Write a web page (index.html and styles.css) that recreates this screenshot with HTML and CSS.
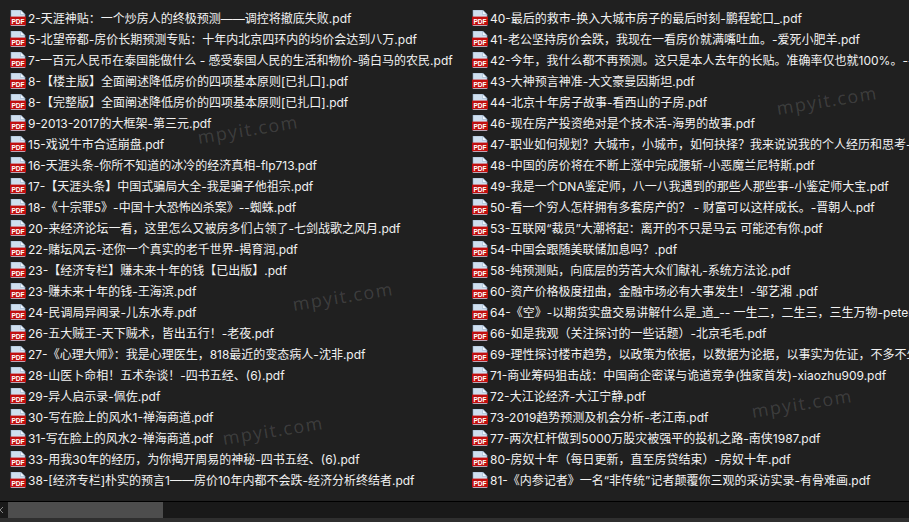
FILE: index.html
```html
<!DOCTYPE html>
<html lang="zh-CN">
<head>
  <meta charset="UTF-8">
  <title>PDF files</title>
  <link rel="stylesheet" href="styles.css">
</head>
<body>
  <svg class="defs" width="0" height="0">
    <symbol id="pdf" viewBox="0 0 16 16">
      <path d="M1 0H10.5L15 4.5V16H1Z" fill="#cfdfef" stroke="#8ea8c4" stroke-width=".6"/>
      <path d="M10.5 0V4.5H15Z" fill="#f2f8ff" stroke="#8ea8c4" stroke-width=".5"/>
      <rect x="0" y="6.6" width="16" height="8.6" fill="#c00f0f"/>
      <text x="8" y="13.6" text-anchor="middle" class="pdf-label">PDF</text>
    </symbol>
  </svg>

  <div class="files">
    <ul class="col">
      <li><svg class="ico"><use href="#pdf"/></svg>2-天涯神贴&#xFF1A;一个炒房人的终极预测——调控将撤底失败.pdf</li>
      <li><svg class="ico"><use href="#pdf"/></svg>5-北望帝都-房价长期预测专贴&#xFF1A;十年内北京四环内的均价会达到八万.pdf</li>
      <li><svg class="ico"><use href="#pdf"/></svg>7-一百元人民币在泰国能做什么 - 感受泰国人民的生活和物价-骑白马的农民.pdf</li>
      <li><svg class="ico"><use href="#pdf"/></svg>8-【楼主版】全面阐述降低房价的四项基本原则[已扎口].pdf</li>
      <li><svg class="ico"><use href="#pdf"/></svg>8-【完整版】全面阐述降低房价的四项基本原则[已扎口].pdf</li>
      <li><svg class="ico"><use href="#pdf"/></svg>9-2013-2017的大框架-第三元.pdf</li>
      <li><svg class="ico"><use href="#pdf"/></svg>15-戏说牛市合适崩盘.pdf</li>
      <li><svg class="ico"><use href="#pdf"/></svg>16-天涯头条-你所不知道的冰冷的经济真相-flp713.pdf</li>
      <li><svg class="ico"><use href="#pdf"/></svg>17-【天涯头条】中国式骗局大全-我是骗子他祖宗.pdf</li>
      <li><svg class="ico"><use href="#pdf"/></svg>18-《十宗罪5》-中国十大恐怖凶杀案》--蜘蛛.pdf</li>
      <li><svg class="ico"><use href="#pdf"/></svg>20-来经济论坛一看&#xFF0C;这里怎么又被房多们占领了-七剑战歌之风月.pdf</li>
      <li><svg class="ico"><use href="#pdf"/></svg>22-赌坛风云-还你一个真实的老千世界-揭育润.pdf</li>
      <li><svg class="ico"><use href="#pdf"/></svg>23-【经济专栏】赚未来十年的钱【已出版】.pdf</li>
      <li><svg class="ico"><use href="#pdf"/></svg>23-赚未来十年的钱-王海滨.pdf</li>
      <li><svg class="ico"><use href="#pdf"/></svg>24-民调局异闻录-儿东水寿.pdf</li>
      <li><svg class="ico"><use href="#pdf"/></svg>26-五大贼王-天下贼术&#xFF0C;皆出五行&#xFF01;-老夜.pdf</li>
      <li><svg class="ico"><use href="#pdf"/></svg>27-《心理大师》&#xFF1A;我是心理医生&#xFF0C;818最近的变态病人-沈非.pdf</li>
      <li><svg class="ico"><use href="#pdf"/></svg>28-山医卜命相&#xFF01;五术杂谈&#xFF01;-四书五经、(6).pdf</li>
      <li><svg class="ico"><use href="#pdf"/></svg>29-异人启示录-佩佐.pdf</li>
      <li><svg class="ico"><use href="#pdf"/></svg>30-写在脸上的风水1-禅海商道.pdf</li>
      <li><svg class="ico"><use href="#pdf"/></svg>31-写在脸上的风水2-禅海商道.pdf</li>
      <li><svg class="ico"><use href="#pdf"/></svg>33-用我30年的经历&#xFF0C;为你揭开周易的神秘-四书五经、(6).pdf</li>
      <li><svg class="ico"><use href="#pdf"/></svg>38-[经济专栏]朴实的预言1——房价10年内都不会跌-经济分析终结者.pdf</li>
    </ul>
    <ul class="col">
      <li><svg class="ico"><use href="#pdf"/></svg>40-最后的救市-换入大城市房子的最后时刻-鹏程蛇口_.pdf</li>
      <li><svg class="ico"><use href="#pdf"/></svg>41-老公坚持房价会跌&#xFF0C;我现在一看房价就满嘴吐血。-爱死小肥羊.pdf</li>
      <li><svg class="ico"><use href="#pdf"/></svg>42-今年&#xFF0C;我什么都不再预测。这只是本人去年的长贴。准确率仅也就100%。--</li>
      <li><svg class="ico"><use href="#pdf"/></svg>43-大神预言神准-大文豪曼因斯坦.pdf</li>
      <li><svg class="ico"><use href="#pdf"/></svg>44-北京十年房子故事-看西山的子房.pdf</li>
      <li><svg class="ico"><use href="#pdf"/></svg>46-现在房产投资绝对是个技术活-海男的故事.pdf</li>
      <li><svg class="ico"><use href="#pdf"/></svg>47-职业如何规划&#xFF1F;大城市&#xFF0C;小城市&#xFF0C;如何抉择&#xFF1F;我来说说我的个人经历和思考-</li>
      <li><svg class="ico"><use href="#pdf"/></svg>48-中国的房价将在不断上涨中完成腰斩-小恶魔兰尼特斯.pdf</li>
      <li><svg class="ico"><use href="#pdf"/></svg>49-我是一个DNA鉴定师&#xFF0C;八一八我遇到的那些人那些事-小鉴定师大宝.pdf</li>
      <li><svg class="ico"><use href="#pdf"/></svg>50-看一个穷人怎样拥有多套房产的&#xFF1F; - 财富可以这样成长。-晋朝人.pdf</li>
      <li><svg class="ico"><use href="#pdf"/></svg>53-互联网“裁员”大潮将起&#xFF1A;离开的不只是马云 可能还有你.pdf</li>
      <li><svg class="ico"><use href="#pdf"/></svg>54-中国会跟随美联储加息吗&#xFF1F;.pdf</li>
      <li><svg class="ico"><use href="#pdf"/></svg>58-纯预测贴&#xFF0C;向底层的劳苦大众们献礼-系统方法论.pdf</li>
      <li><svg class="ico"><use href="#pdf"/></svg>60-资产价格极度扭曲&#xFF0C;金融市场必有大事发生&#xFF01;-邹艺湘 .pdf</li>
      <li><svg class="ico"><use href="#pdf"/></svg>64-《空》-以期货实盘交易讲解什么是_道_-- 一生二&#xFF0C;二生三&#xFF0C;三生万物-peter</li>
      <li><svg class="ico"><use href="#pdf"/></svg>66-如是我观&#xFF08;关注探讨的一些话题&#xFF09;-北京毛毛.pdf</li>
      <li><svg class="ico"><use href="#pdf"/></svg>69-理性探讨楼市趋势&#xFF0C;以政策为依据&#xFF0C;以数据为论据&#xFF0C;以事实为佐证&#xFF0C;不多不少</li>
      <li><svg class="ico"><use href="#pdf"/></svg>71-商业筹码狙击战&#xFF1A;中国商企密谋与诡道竞争(独家首发)-xiaozhu909.pdf</li>
      <li><svg class="ico"><use href="#pdf"/></svg>72-大江论经济-大江宁静.pdf</li>
      <li><svg class="ico"><use href="#pdf"/></svg>73-2019趋势预测及机会分析-老江南.pdf</li>
      <li><svg class="ico"><use href="#pdf"/></svg>77-两次杠杆做到5000万股灾被强平的投机之路-南侠1987.pdf</li>
      <li><svg class="ico"><use href="#pdf"/></svg>80-房奴十年&#xFF08;每日更新&#xFF0C;直至房贷结束&#xFF09;-房奴十年.pdf</li>
      <li><svg class="ico"><use href="#pdf"/></svg>81-《内参记者》一名“非传统”记者颠覆你三观的采访实录-有骨难画.pdf</li>
    </ul>

    <!-- watermarks over the list -->
    <span class="mark mark-a">mpyit.com</span>
    <span class="mark mark-b">mpyit.com</span>
    <span class="mark mark-c">mpyit.com</span>
    <span class="mark mark-d">mpyit.com</span>
    <span class="mark mark-e">mpyit.com</span>
  </div>

  <div class="hscroll">
    <svg class="arrow" viewBox="0 0 8 16"><path d="M3 5L0 8L3 11" fill="none" stroke="#888" stroke-width="1"/></svg>
    <div class="thumb"></div>
  </div>
  <div class="bottom"></div>
</body>
</html>
```

FILE: styles.css
```css
html, body {
  height: 100%;
}
body {
  margin: 0;
  background: #202020;
  color: #f2f2f2;
  font-family: Inter, "Noto Sans CJK SC", sans-serif;
  font-size: 12px;
  display: flex;
  flex-direction: column;
  overflow: hidden;
}
.defs {
  position: absolute;
}
.pdf-label {
  font-family: "Liberation Sans", sans-serif;
  font-size: 6.6px;
  font-weight: bold;
  fill: #fff;
}
.files {
  position: relative;
  flex: 1;
  min-height: 0;
  display: grid;
  grid-template-columns: 462px 1fr;
  padding: 7px 0 0 10px;
  border-bottom: 1px solid #000;
  overflow: hidden;
}
.col {
  list-style: none;
  margin: 0;
  padding: 0;
  min-width: 0;
}
.col li {
  display: flex;
  align-items: center;
  gap: 2px;
  height: 21px;
  white-space: nowrap;
}
.ico {
  flex: none;
  width: 16px;
  height: 16px;
}
.mark {
  position: absolute;
  font-family: "Open Sans", sans-serif;
  font-size: 18px;
  letter-spacing: 1.5px;
  color: rgba(255, 255, 255, 0.14);
  transform: rotate(-9deg);
  white-space: nowrap;
}
.mark-a { left: 197px; top: 117px; }
.mark-b { left: 776px; top: 88px; }
.mark-c { left: 292px; top: 284px; }
.mark-d { left: 222px; top: 418px; }
.mark-e { left: 751px; top: 391px; }
.hscroll {
  flex: none;
  display: flex;
  height: 16px;
  background: #191919;
}
.arrow {
  flex: none;
  width: 8px;
  height: 16px;
}
.thumb {
  width: 155px;
  height: 100%;
  background: #4d4d4d;
}
.bottom {
  flex: none;
  height: 4px;
  background: #2f2f2f;
}
```
